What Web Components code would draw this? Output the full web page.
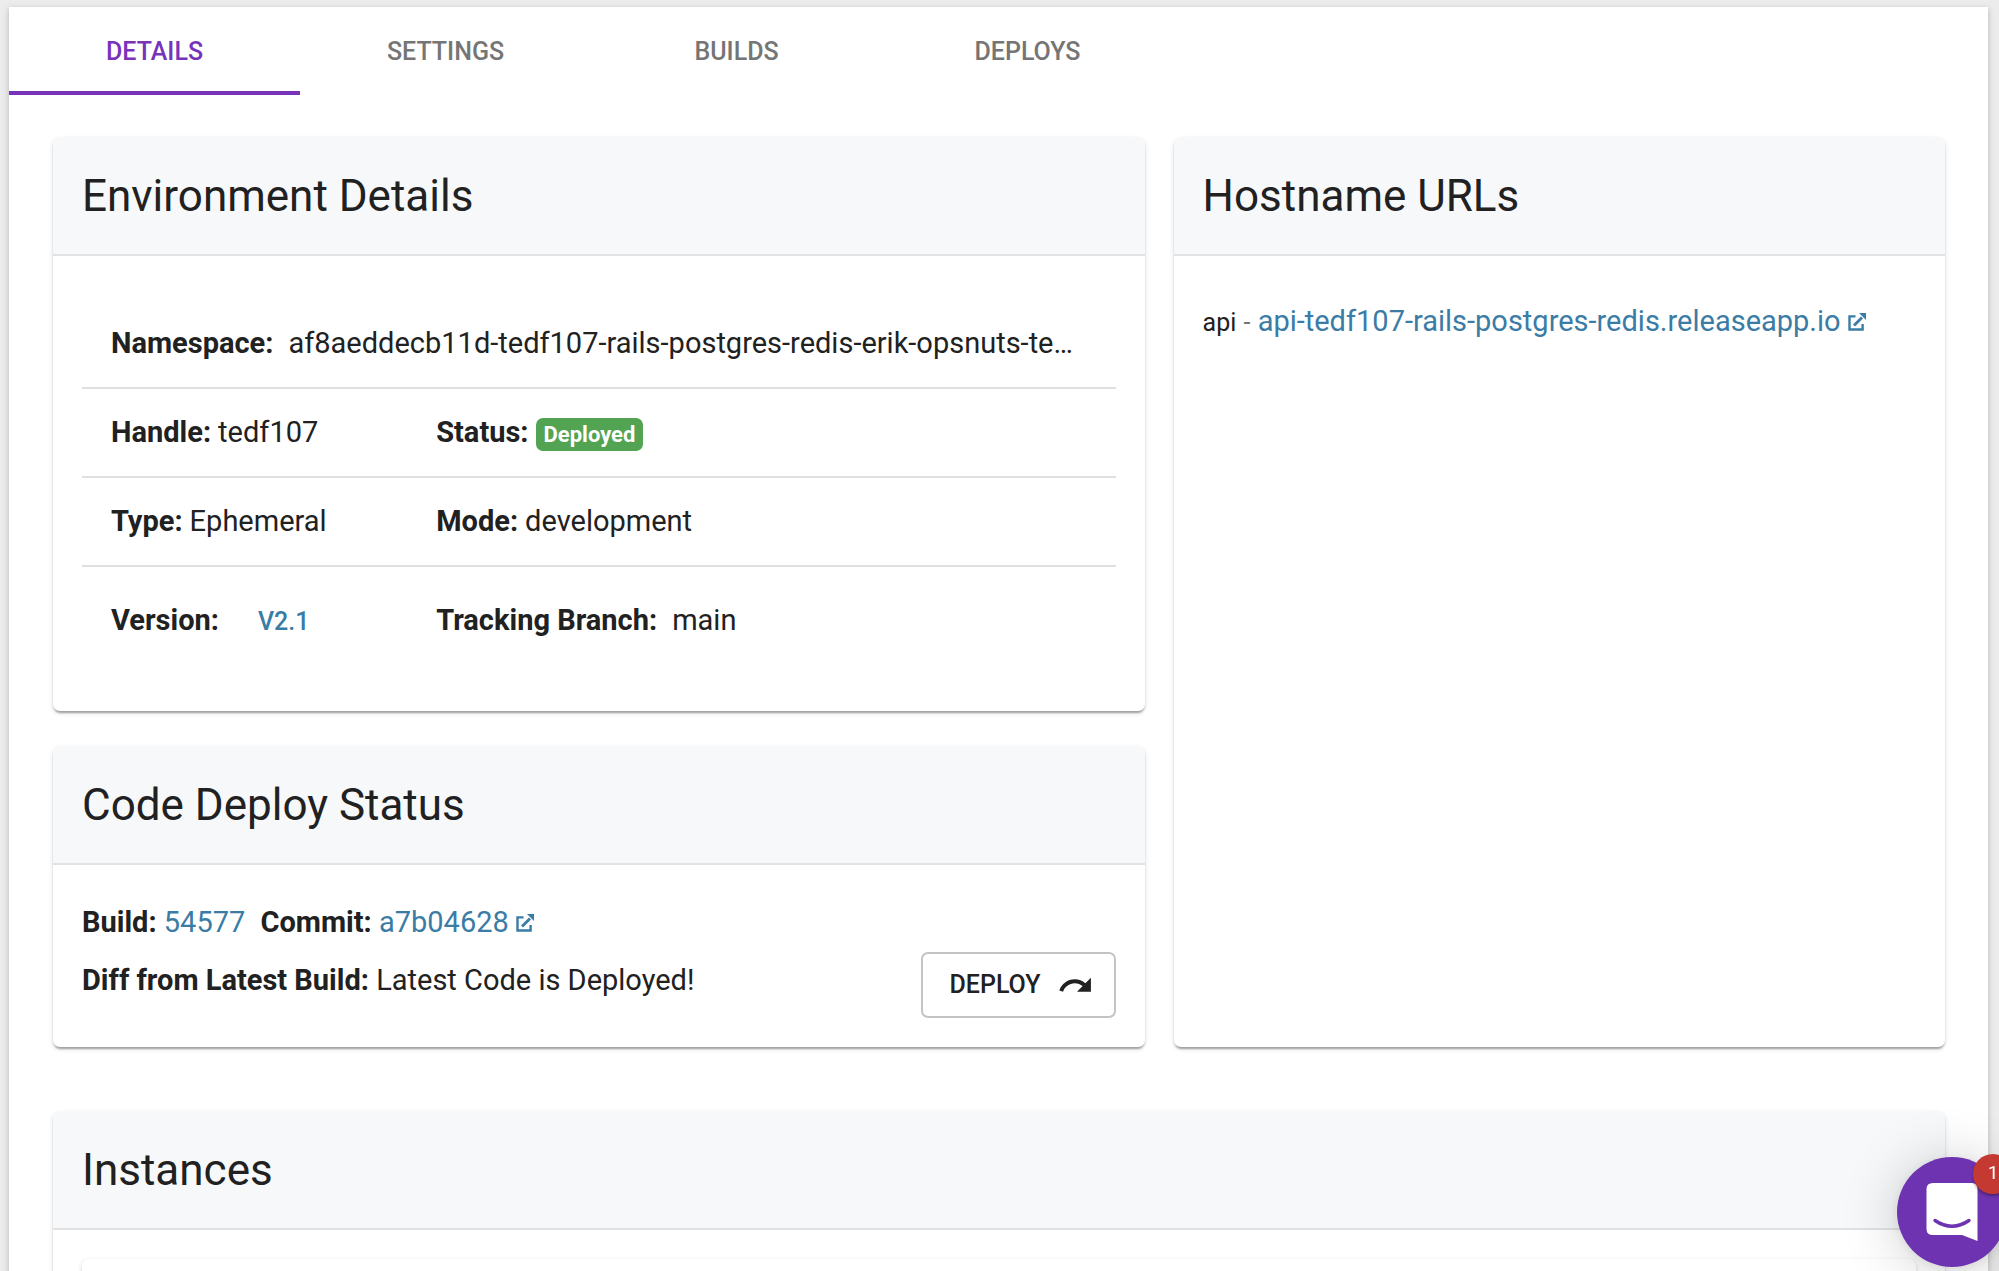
<!DOCTYPE html>
<html lang="en">
<head>
<meta charset="utf-8">
<meta name="viewport" content="width=device-width, initial-scale=1">
<title>Environment</title>
<style>
  body { margin: 0; background: #ececec; color: #212121; font-family: Roboto, "Liberation Sans", sans-serif; font-size: 29px; line-height: 44px; }
</style>
</head>
<body>
<env-page></env-page>

<script>
const define = (name, html, setup) => {
  const template = document.createElement('template');
  template.innerHTML = html;
  customElements.define(name, class extends HTMLElement {
    constructor() {
      super();
      this.attachShadow({ mode: 'open' }).append(template.content.cloneNode(true));
    }
    connectedCallback() { if (setup) setup(this, this.shadowRoot); }
  });
};

define('tab-bar', `
<style>
  :host { display: block; }
  nav { display: flex; }
</style>
<nav role="tablist" aria-label="Environment sections"><slot></slot></nav>`);

define('tab-item', `
<style>
  :host { display: block; flex: 0 0 291px; }
  button { width: 100%; height: 88px; padding: 6px 22px 0; border: 0; border-bottom: 4px solid transparent; background: none;
    font: 500 25px/36px Roboto, "Liberation Sans", sans-serif; color: #757575; text-transform: uppercase; cursor: pointer; }
  :host([selected]) button { color: #7733b9; border-bottom-color: #7733b9; }
</style>
<button type="button" role="tab"><slot></slot></button>`,
(el, root) => root.querySelector('button').setAttribute('aria-selected', el.hasAttribute('selected')));

define('info-card', `
<style>
  :host { display: flex; flex-direction: column; background: #fff; border-radius: 7px;
    box-shadow: 0 4px 2px -2px rgba(0,0,0,.2), 0 2px 2px rgba(0,0,0,.14), 0 2px 5px rgba(0,0,0,.12); }
  header { padding: 30px 29px 29px; border-bottom: 2px solid #e0e2e4; background: #f7f8fa; border-radius: 7px 7px 0 0; }
  h2 { margin: 0; font-size: 44px; line-height: 58px; font-weight: 400; }
  .body { padding: 29px; flex: 1; }
</style>
<header><h2></h2></header>
<div class="body"><slot></slot></div>`,
(el, root) => { root.querySelector('h2').textContent = el.getAttribute('heading'); });

define('detail-row', `
<style>
  :host { display: block; border-bottom: 2px solid #e0e0e0; padding: 21px 29px 22px; }
  :host(:last-of-type) { border-bottom: 0; padding: 20px 29px 14px; }
  .cells { display: grid; grid-template-columns: 1fr 2fr; align-items: center; }
  :host([wide]) .cells { grid-template-columns: 1fr; }
</style>
<div class="cells"><slot></slot></div>`);

define('detail-field', `
<style>
  :host { display: flex; align-items: center; gap: 7px; min-width: 0; white-space: nowrap; }
  :host([loose]) { gap: 15px; }
  b { font-weight: 700; }
  .value { min-width: 0; overflow: hidden; text-overflow: ellipsis; }
</style>
<b></b><span class="value"><slot></slot></span>`,
(el, root) => { root.querySelector('b').textContent = el.getAttribute('label') + ':'; });

define('status-badge', `
<style>
  :host { display: inline-block; vertical-align: middle; padding: 0 8px; border-radius: 7px; background: #52a352; color: #fff;
    font-size: 22px; line-height: 33px; font-weight: 700; }
</style>
<slot></slot>`);

define('version-button', `
<style>
  :host { display: block; }
  button { height: 66px; padding: 4px 24px 0; border: 0; background: none; color: #3a7ca5; vertical-align: top;
    font: 500 25px/44px Roboto, "Liberation Sans", sans-serif; cursor: pointer; }
</style>
<button type="button"><slot></slot></button>`);

define('text-link', `
<style>
  :host { display: inline; }
  a { color: #3a7ca5; text-decoration: none; }
  svg { display: none; width: 18px; height: 18px; margin-left: 7px; fill: none; stroke: currentColor; stroke-width: 2.4; }
  :host([external]) svg { display: inline-block; }
</style>
<a href="#"><slot></slot><svg viewBox="0 0 18 18" aria-hidden="true"><path d="M7.5 3.4H1.5V16.5H14.6V11"/><path d="M6 12.5L14 4.5" stroke-width="2.8"/><path d="M11 0H18V7Z" fill="currentColor" stroke="none"/></svg></a>`);

define('deploy-button', `
<style>
  :host { display: block; }
  button { display: flex; align-items: center; gap: 16px; height: 66px; padding: 0 20px 0 26px; border: 2px solid #c4c4c4; border-radius: 7px;
    background: #fff; color: #212121; font: 500 25px/44px Roboto, "Liberation Sans", sans-serif; text-transform: uppercase; cursor: pointer; }
  svg { width: 37px; height: 37px; fill: currentColor; }
</style>
<button type="button"><slot></slot><svg viewBox="0 0 24 24" aria-hidden="true"><path d="M18.4 10.6C16.55 8.99 14.15 8 11.5 8c-4.65 0-8.58 3.03-9.96 7.22L3.9 16c1.05-3.19 4.05-5.5 7.6-5.5 1.95 0 3.73.72 5.12 1.88L13 16h9V7l-3.6 3.6z"/></svg></button>`);

define('deploy-summary', `
<style>
  :host { display: flex; justify-content: space-between; align-items: flex-end; }
  .lines { display: flex; flex-direction: column; gap: 6px; line-height: 52px; padding: 2px 0 12px; }
</style>
<div class="lines"><slot></slot></div><slot name="action"></slot>`);

define('chat-launcher', `
<style>
  :host { position: fixed; right: -8px; bottom: 4px; display: block; }
  button { display: grid; place-items: center; width: 110px; height: 110px; padding: 0; border: 0; border-radius: 50%; background: #6e33b1;
    box-shadow: 0 2px 12px rgba(0,0,0,.08), 0 4px 58px rgba(0,0,0,.2); cursor: pointer; }
  svg { width: 52px; height: 60px; }
  .count { position: absolute; top: -3px; right: -6px; width: 40px; height: 40px; border-radius: 50%; background: #c43a33; color: #fff;
    font-size: 19px; line-height: 38px; text-align: center; box-shadow: 0 2px 3px rgba(0,0,0,.35); }
</style>
<button type="button" aria-label="Open chat"><svg viewBox="0 0 52 60" aria-hidden="true"><path d="M7 1H46Q51.500 1 51.500 7V59L36 53H7Q0.500 53 0.500 47V7Q0.500 1 7 1Z" fill="#fff"/><path d="M9 38.500Q26 50 43 38.500" fill="none" stroke="#6e33b1" stroke-width="3.400" stroke-linecap="round"/></svg></button>
<span class="count"><slot></slot></span>`);

define('env-page', `
<style>
  :host { display: block; box-sizing: border-box; height: 100vh; overflow: hidden; padding: 7px 11px 0 9px; }
  main { background: #fff; min-height: 100vh; box-shadow: 0 2px 6px rgba(0,0,0,.24); }
  .content { display: grid; grid-template-columns: repeat(12, minmax(0, 1fr)); column-gap: 29px; row-gap: 64px; padding: 42px 43px 42px 44px; }
  .left { grid-column: span 7; display: flex; flex-direction: column; gap: 35px; }
  .right { grid-column: span 5; }
  .full { grid-column: span 12; }
  .list { padding: 15px 0; }
  .hosts { margin: 0; padding-top: 14px; }
  .host { font-size: 25px; }
  .dash { font-size: 25px; color: #757575; }
  .commit { margin-left: 8px; }
  .instance { min-height: 240px; border-radius: 7px; background: #fff; box-shadow: 0 2px 5px rgba(0,0,0,.18); }
  b { font-weight: 700; }
</style>
<main>
  <tab-bar>
    <tab-item selected>Details</tab-item>
    <tab-item>Settings</tab-item>
    <tab-item>Builds</tab-item>
    <tab-item>Deploys</tab-item>
  </tab-bar>
  <div class="content">
    <div class="left">
      <info-card heading="Environment Details">
        <div class="list">
          <detail-row wide><detail-field loose label="Namespace">af8aeddecb11d-tedf107-rails-postgres-redis-erik-opsnuts-te…</detail-field></detail-row>
          <detail-row><detail-field label="Handle">tedf107</detail-field><detail-field label="Status"><status-badge>Deployed</status-badge></detail-field></detail-row>
          <detail-row><detail-field label="Type">Ephemeral</detail-field><detail-field label="Mode">development</detail-field></detail-row>
          <detail-row><detail-field loose label="Version"><version-button>V2.1</version-button></detail-field><detail-field loose label="Tracking Branch">main</detail-field></detail-row>
        </div>
      </info-card>
      <info-card heading="Code Deploy Status">
        <deploy-summary>
          <div><b>Build:</b> <text-link>54577</text-link> <b class="commit">Commit:</b> <text-link external>a7b04628</text-link></div>
          <div><b>Diff from Latest Build:</b> Latest Code is Deployed!</div>
          <deploy-button slot="action">Deploy</deploy-button>
        </deploy-summary>
      </info-card>
    </div>
    <info-card class="right" heading="Hostname URLs">
      <p class="hosts"><span class="host">api</span> <span class="dash">-</span> <text-link external>api-tedf107-rails-postgres-redis.releaseapp.io</text-link></p>
    </info-card>
    <info-card class="full" heading="Instances"><div class="instance"></div></info-card>
  </div>
</main>
<chat-launcher>1</chat-launcher>`);
</script>
</body>
</html>
